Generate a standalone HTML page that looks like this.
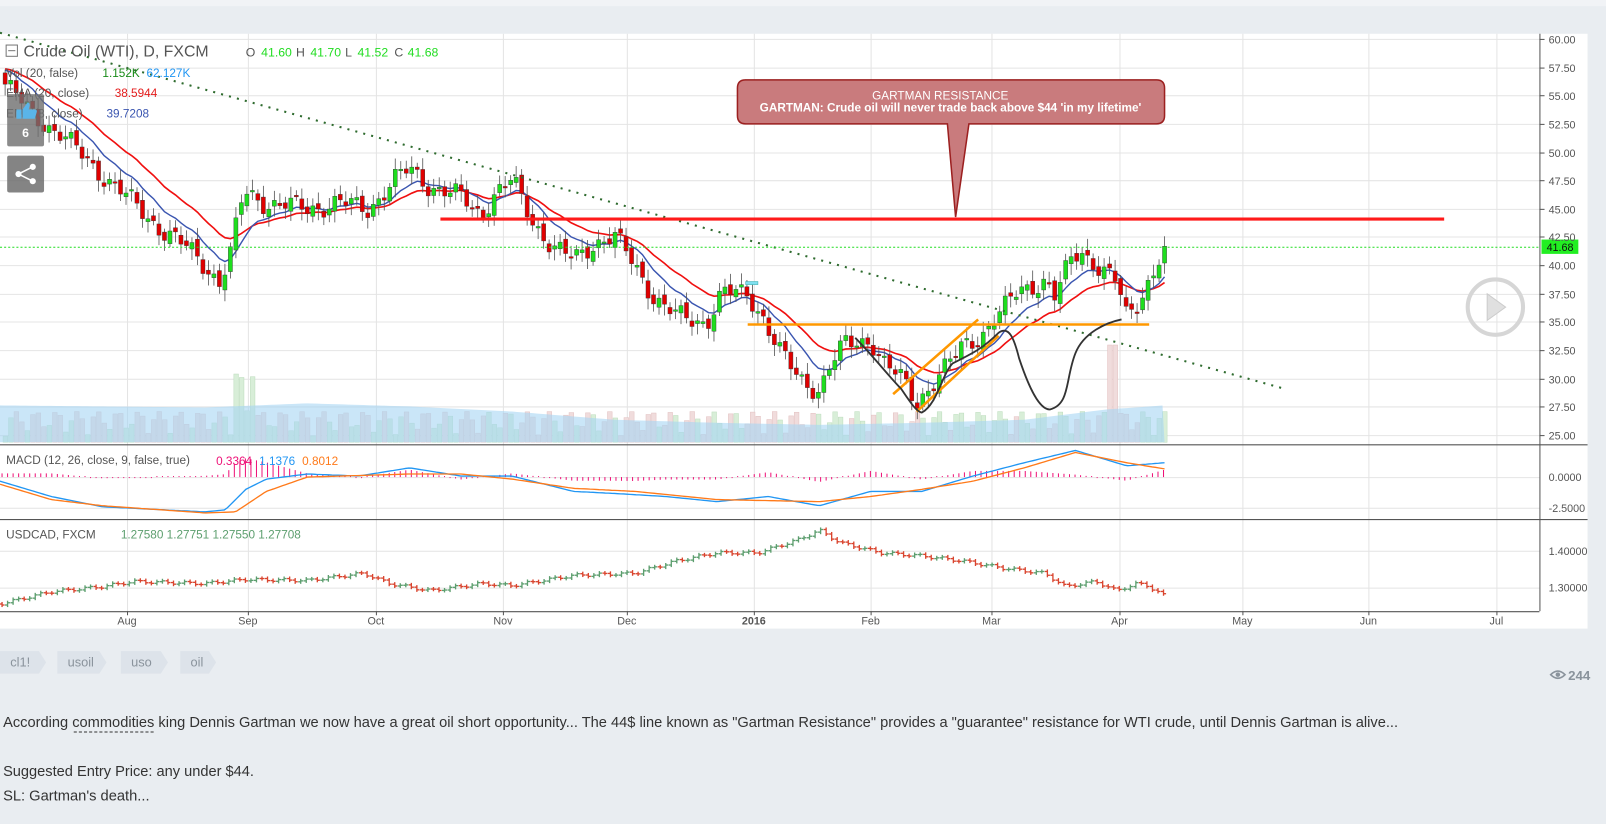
<!DOCTYPE html>
<html><head><meta charset="utf-8">
<style>
html,body{margin:0;padding:0;background:#e9edf1;overflow:hidden;width:1606px;height:819px}
#wrap{position:absolute;left:0;top:0;width:1568px;height:800px;transform:scale(1.02423,1.02375);transform-origin:0 0;font-family:"Liberation Sans",sans-serif}
</style></head><body>
<div id="wrap">
<svg id="s" width="1568" height="800" viewBox="0 0 1568 800" xmlns="http://www.w3.org/2000/svg" font-family="Liberation Sans, sans-serif">
<rect x="0" y="0" width="1568" height="800" fill="#e9edf1"/>
<rect x="0" y="0" width="1568" height="6" fill="#f1f3f6"/>
<rect x="0" y="33" width="1550" height="581" fill="#ffffff"/>
<g id="grid" stroke="#e4e4e4" stroke-width="1"></g>
<g id="vol"></g>
<g id="ov"></g>
<g id="candles"></g>
<g id="draw"></g>
<g id="axis" font-size="10.5" fill="#555"></g>
</svg>
</div>
<script>
var NS="http://www.w3.org/2000/svg";
function el(p,t,a,txt){var e=document.createElementNS(NS,t);for(var k in a)e.setAttribute(k,a[k]);if(txt!=null)e.textContent=txt;document.getElementById(p).appendChild(e);return e;}
function py(p){return 38+(60-p)*11.057;}
var months=[[124,"Aug"],[242,"Sep"],[367,"Oct"],[491,"Nov"],[612,"Dec"],[736,"2016"],[850,"Feb"],[968,"Mar"],[1093,"Apr"],[1213,"May"],[1336,"Jun"],[1461,"Jul"]];
months.forEach(function(m){el("grid","line",{x1:m[0]+0.5,y1:33,x2:m[0]+0.5,y2:597});});
for(var p=25;p<=60;p+=2.5){var y=Math.round(py(p))+0.5;el("grid","line",{x1:0,y1:y,x2:1503,y2:y});
 el("axis","line",{x1:1503,y1:y,x2:1508,y2:y,stroke:"#555"});el("axis","text",{x:1512,y:y+4},p.toFixed(2));}
[[466,"0.0000"],[496,"-2.5000"]].forEach(function(a){el("grid","line",{x1:0,y1:a[0]+.5,x2:1503,y2:a[0]+.5});el("axis","text",{x:1512,y:a[0]+4},a[1]);});
[[538,"1.40000"],[574,"1.30000"]].forEach(function(a){el("grid","line",{x1:0,y1:a[0]+.5,x2:1503,y2:a[0]+.5});el("axis","text",{x:1512,y:a[0]+4},a[1]);});
el("axis","line",{x1:1503.5,y1:33,x2:1503.5,y2:597,stroke:"#555"});
[434,507].forEach(function(y){el("axis","line",{x1:0,y1:y+.5,x2:1550,y2:y+.5,stroke:"#555"});});
el("axis","line",{x1:0,y1:597.5,x2:1503,y2:597.5,stroke:"#555"});
months.forEach(function(m){el("axis","line",{x1:m[0]+.5,y1:597,x2:m[0]+.5,y2:601,stroke:"#555"});el("axis","text",{x:m[0],y:610,"text-anchor":"middle","font-weight":m[1]=="2016"?"bold":"normal"},m[1]);});
var K=[[5,56],[30,53.5],[60,51.5],[100,48],[130,45.5],[160,43],[190,41],[215,38.5],[225,41],[238,46.5],[260,45.5],[300,45],[330,45.5],[360,45],[385,47.5],[400,48.5],[420,47],[450,46],[470,44.5],[480,46],[500,47.5],[520,44],[540,41.5],[560,40.5],[580,42],[600,42.5],[620,40],[640,37],[660,35.5],[690,35],[705,37.5],[730,37.5],[745,35.5],[760,32.5],[780,30],[800,29],[810,31],[825,33],[850,33.5],[865,31],[880,30],[895,28],[910,29.5],[925,31],[940,33],[960,34],[980,36],[995,38],[1020,38.5],[1030,37],[1045,40.5],[1055,41.5],[1075,39.5],[1090,38.5],[1100,35.5],[1115,37.5],[1130,40],[1137,41.68]];
function interp(P,x){for(var i=0;i<P.length-1;i++){if(x<=P[i+1][0]){var t=(x-P[i][0])/(P[i+1][0]-P[i][0]);return P[i][1]+t*(P[i+1][1]-P[i][1]);}}return P[P.length-1][1];}
var N=212,xs=[],cl=[];
for(var i=0;i<N;i++){var x=5+i*(1132/(N-1));xs.push(x);var n=Math.sin(i*1.7)*0.6+Math.sin(i*0.63)*0.5;cl.push(interp(K,x)+(i==N-1?0:n));}
function ema(a,n){var k=2/(n+1),r=[],e=a[0]+1.5;for(var i=0;i<a.length;i++){e=a[i]*k+e*(1-k);r.push(e);}return r;}
var e10=ema(cl,10),e20=ema(cl,20);
for(var i=0;i<N;i++){var h=6+Math.abs(Math.sin(i*2.3))*24;var x=xs[i];
 if(x>225&&x<250)h=30+Math.abs(Math.sin(i))*40; if(x>1080&&x<1092)h=95;
 var up=cl[i]>=(i?cl[i-1]:cl[i]);el("vol","rect",{x:x-2,y:432-h,width:4.5,height:h,fill:up?"#d8eed8":"#f0dcdc",stroke:up?"#bcdcbc":"#e2c0c0","stroke-width":0.5});}
var ad="M0,432 L0,398 ";var VA=[[0,396],[200,398],[300,394],[400,397],[500,402],[600,410],[700,413],[800,415],[900,413],[1000,410],[1080,400],[1137,396]];
for(var x=0;x<=1137;x+=5)ad+="L"+x+","+interp(VA,x)+" ";ad+="L1137,432Z";
el("vol","path",{d:ad,fill:"#a6d6f3","fill-opacity":0.6});
for(var i=0;i<N;i++){var o=i?cl[i-1]+Math.sin(i*3.1)*0.3:cl[i]+1,c=cl[i];var hi=Math.max(o,c)+0.3+Math.abs(Math.sin(i*1.3))*0.7,lo=Math.min(o,c)-0.3-Math.abs(Math.cos(i*1.1))*0.7;
 var up=c>=o,x=xs[i];el("candles","line",{x1:x,y1:py(hi),x2:x,y2:py(lo),stroke:"#555","stroke-width":0.8});
 var t=py(Math.max(o,c)),b=py(Math.min(o,c));el("candles","rect",{x:x-2,y:t,width:4,height:Math.max(1.5,b-t),fill:up?"#1ede1e":"#e00000",stroke:"#333","stroke-width":0.4});}
function pl(arr){var d="";for(var i=0;i<N;i++)d+=(i?"L":"M")+xs[i].toFixed(1)+","+py(arr[i]).toFixed(1);return d;}
el("ov","path",{d:pl(e20),fill:"none",stroke:"#f01010","stroke-width":1.6});
el("ov","path",{d:pl(e10),fill:"none",stroke:"#3a55b0","stroke-width":1.4});
el("draw","line",{x1:0,y1:32,x2:1255,y2:380,stroke:"#2e6b2e","stroke-width":2,"stroke-dasharray":"2 6"});
el("draw","line",{x1:0,y1:241.5,x2:1503,y2:241.5,stroke:"#22dd22","stroke-width":1,"stroke-dasharray":"2 2"});
el("draw","line",{x1:430,y1:214,x2:1410,y2:214,stroke:"#ff1a1a","stroke-width":3});
el("draw","line",{x1:730,y1:317,x2:1122,y2:317,stroke:"#ff9800","stroke-width":2.5});
el("draw","line",{x1:872,y1:385,x2:955,y2:312,stroke:"#ff9800","stroke-width":2.5});
el("draw","line",{x1:895,y1:402,x2:975,y2:328,stroke:"#ff9800","stroke-width":2.5});
el("draw","path",{d:"M835,330 C850,345 870,370 880,380 C890,395 895,402 900,403 C915,395 920,365 930,355 C950,345 960,340 975,325 C985,318 990,330 995,350 C1005,380 1015,400 1025,400 C1045,395 1040,370 1050,345 C1058,325 1080,315 1095,312",fill:"none",stroke:"#333","stroke-width":1.8});
el("draw","rect",{x:728,y:275,width:12,height:3,fill:"#7fe0f0",stroke:"#3aa","stroke-width":0.5});
el("draw","path",{d:"M727,78 H1129 Q1137,78 1137,86 V113 Q1137,121 1129,121 H946 L933,212 L925,121 H728 Q720,121 720,113 V86 Q720,78 728,78Z",fill:"#c97b7d",stroke:"#9c2020","stroke-width":1.5});
el("draw","text",{x:918,y:97,"text-anchor":"middle","font-size":"11.5","fill":"#fff"},"GARTMAN RESISTANCE");
el("draw","text",{x:928,y:109,"text-anchor":"middle","font-size":"11.5","font-weight":"bold","fill":"#fff"},"GARTMAN: Crude oil will never trade back above $44 'in my lifetime'");
el("draw","rect",{x:1505,y:234,width:36,height:14,fill:"#22ee22"});
el("draw","text",{x:1510,y:245,"font-size":"10.5",fill:"#111"},"41.68");
el("draw","ellipse",{cx:1460,cy:300,rx:27,ry:27,fill:"none",stroke:"#d6d6d6","stroke-width":4});
el("draw","path",{d:"M1452,287 L1470,300 L1452,313Z",fill:"#e0e0e0",stroke:"#ccc"});
el("draw","rect",{x:6,y:44,width:11,height:11,fill:"none",stroke:"#777"});
el("draw","line",{x1:8,y1:49.5,x2:15,y2:49.5,stroke:"#777"});
el("draw","text",{x:23,y:55,"font-size":"15.5",fill:"#555"},"Crude Oil (WTI), D, FXCM");
var T=[[240,"O","#555"],[255,"41.60","#22dd22"],[289,"H","#555"],[303,"41.70","#22dd22"],[337,"L","#555"],[349,"41.52","#22dd22"],[385,"C","#555"],[398,"41.68","#22dd22"]];
T.forEach(function(t){el("draw","text",{x:t[0],y:55,"font-size":"12",fill:t[2]},t[1]);});
el("draw","text",{x:6,y:75,"font-size":"11.5",fill:"#555"},"Vol (20, false)");
el("draw","text",{x:100,y:75,"font-size":"11.5",fill:"#1a8c1a"},"1.152K");
el("draw","text",{x:143,y:75,"font-size":"11.5",fill:"#2196f3"},"62.127K");
el("draw","text",{x:6,y:95,"font-size":"11.5",fill:"#555"},"EMA (20, close)");
el("draw","text",{x:112,y:95,"font-size":"11.5",fill:"#e41b1b"},"38.5944");
el("draw","text",{x:6,y:115,"font-size":"11.5",fill:"#555"},"EMA (8, close)");
el("draw","text",{x:104,y:115,"font-size":"11.5",fill:"#3a55b0"},"39.7208");
el("draw","rect",{x:7,y:92,width:36,height:51,rx:2,fill:"#6e6e6e","fill-opacity":0.8});
el("draw","path",{d:"M16,107 h5 v9 h-5z M22,107 l5,-7 q2,0 2,3 l-1,4 h6 q2,0 2,2 l-2,7 h-12z",fill:"#5ab4e8"});
el("draw","text",{x:25,y:134,"font-size":"12",fill:"#fff","text-anchor":"middle","font-weight":"bold"},"6");
el("draw","rect",{x:7,y:152,width:36,height:36,rx:2,fill:"#6e6e6e","fill-opacity":0.85});
el("draw","circle",{cx:32,cy:163,r:3,fill:"#fff"});el("draw","circle",{cx:18,cy:170,r:3,fill:"#fff"});el("draw","circle",{cx:32,cy:177,r:3,fill:"#fff"});
el("draw","path",{d:"M32,163 L18,170 L32,177",stroke:"#fff","stroke-width":1.5,fill:"none"});
var MB=[[0,470],[50,485],[100,495],[200,500],[220,498],[240,478],[260,468],[300,463],[350,465],[400,457],[450,465],[500,465],[560,480],[600,482],[650,485],[700,490],[750,485],[800,494],[850,480],[900,480],[950,465],[1000,452],[1050,440],[1100,455],[1137,452]];
var MO=[[0,473],[50,488],[100,494],[200,501],[230,500],[260,480],[300,466],[400,463],[450,463],[500,468],[560,477],[620,480],[700,488],[800,490],[850,485],[900,478],[950,470],[1000,457],[1050,442],[1100,452],[1137,458]];
function lp(P){var d="";for(var x=0;x<=1137;x+=3)d+=(x?"L":"M")+x+","+interp(P,x).toFixed(1);return d;}
for(var x=2;x<=1137;x+=5.4){var h=(interp(MO,x)-interp(MB,x))*1.2;if(Math.abs(h)<1)h=h<0?-1:1;el("draw","line",{x1:x,y1:466,x2:x,y2:466-h,stroke:"#ee1177","stroke-width":1});}
el("draw","path",{d:lp(MB),fill:"none",stroke:"#2196f3","stroke-width":1.3});
el("draw","path",{d:lp(MO),fill:"none",stroke:"#ff7a1a","stroke-width":1.3});
el("draw","text",{x:6,y:453,"font-size":"11.5",fill:"#555"},"MACD (12, 26, close, 9, false, true)");
el("draw","text",{x:211,y:454,"font-size":"11.5",fill:"#ee1177"},"0.3364");
el("draw","text",{x:253,y:454,"font-size":"11.5",fill:"#2196f3"},"1.1376");
el("draw","text",{x:295,y:454,"font-size":"11.5",fill:"#ff7a1a"},"0.8012");
var U=[[0,590],[50,578],[100,573],[130,568],[200,570],[240,566],[300,567],[355,560],[380,570],[420,577],[470,570],[500,572],[560,562],[620,560],[660,548],[700,540],[740,540],[780,527],[800,518],[820,530],[860,540],[900,543],[940,548],[980,555],[1020,560],[1040,573],[1070,568],[1090,577],[1110,570],[1120,572],[1137,582]];
var prev=interp(U,0);
for(var x=2;x<=1137;x+=5.4){var v=interp(U,x)+Math.sin(x*0.9)*1.5;var c=v<prev?"#5c9e6e":"#d9442e";
 el("draw","line",{x1:x,y1:Math.min(v,prev)-2,x2:x,y2:Math.max(v,prev)+2,stroke:c,"stroke-width":1.3});
 el("draw","line",{x1:x-2.5,y1:prev,x2:x,y2:prev,stroke:c,"stroke-width":1.3});el("draw","line",{x1:x,y1:v,x2:x+2.5,y2:v,stroke:c,"stroke-width":1.3});prev=v;}
el("draw","text",{x:6,y:526,"font-size":"11.5",fill:"#555"},"USDCAD, FXCM");
el("draw","text",{x:118,y:526,"font-size":"11.5",fill:"#5c9e6e"},"1.27580  1.27751  1.27550  1.27708");
[[0,45,"cl1!"],[56,104,"usoil"],[118,164,"uso"],[176,211,"oil"]].forEach(function(t){
 el("draw","path",{d:"M"+t[0]+",636 H"+(t[1]-7)+" L"+t[1]+",647 L"+(t[1]-7)+",658 H"+t[0]+"Z",fill:"#dde3ea"});
 el("draw","text",{x:t[0]+10,y:651,"font-size":"12.5",fill:"#8a939c"},t[2]);});
el("draw","path",{d:"M1514,659 Q1521,652 1528,659 Q1521,666 1514,659Z",fill:"none",stroke:"#8a939c","stroke-width":1.6});
el("draw","circle",{cx:1521,cy:659,r:2.2,fill:"#8a939c"});
el("draw","text",{x:1531,y:664,"font-size":"13","font-weight":"bold",fill:"#8a939c"},"244");
el("draw","text",{x:3,y:710,"font-size":"14.5",fill:"#333",textLength:1362,lengthAdjust:"spacingAndGlyphs"},"According commodities king Dennis Gartman we now have a great oil short opportunity... The 44$ line known as \"Gartman Resistance\" provides a \"guarantee\" resistance for WTI crude, until Dennis Gartman is alive...");
el("draw","line",{x1:72,y1:715,x2:150,y2:715,stroke:"#333","stroke-dasharray":"3 2"});
el("draw","text",{x:3,y:758,"font-size":"14.5",fill:"#333",textLength:245,lengthAdjust:"spacingAndGlyphs"},"Suggested Entry Price: any under $44.");
el("draw","text",{x:3,y:782,"font-size":"14.5",fill:"#333",textLength:143,lengthAdjust:"spacingAndGlyphs"},"SL: Gartman's death...");
</script>
</body></html>
